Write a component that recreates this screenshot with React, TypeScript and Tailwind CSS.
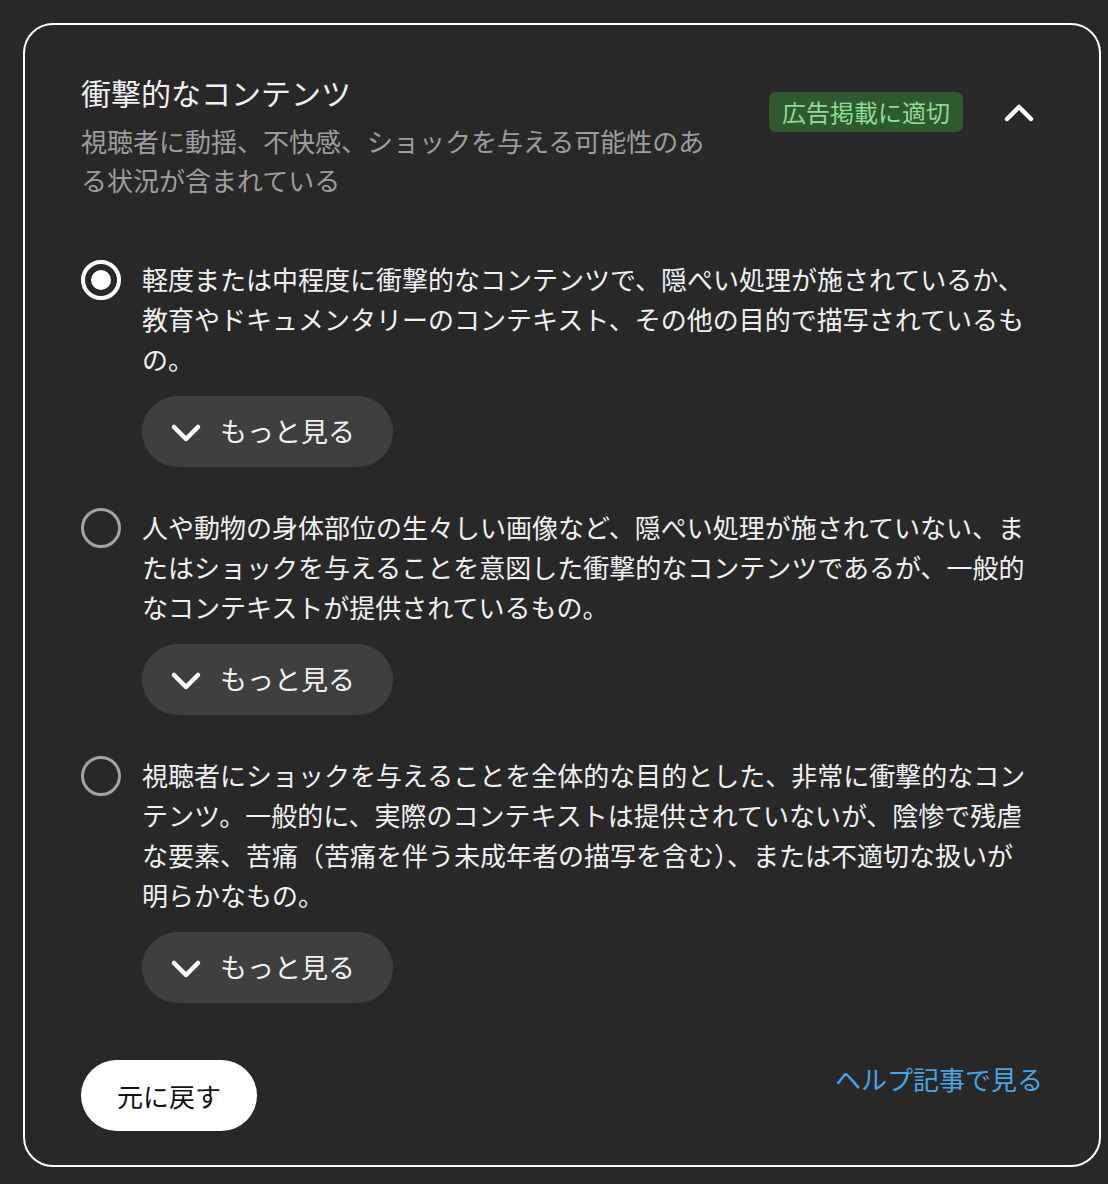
import React from "react";

const font = { fontFamily: '"Noto Sans CJK JP", "Noto Sans", sans-serif' };

function ChevronDown() {
  return (
    <svg width="32" height="32" viewBox="0 0 32 32" fill="none">
      <path d="M4 11 L16 23 L28 11" stroke="#ffffff" strokeWidth="4.5" strokeLinecap="round" strokeLinejoin="round" />
    </svg>
  );
}

function ChevronUp() {
  return (
    <svg width="32" height="32" viewBox="0 0 32 32" fill="none">
      <path d="M4 23 L16 11 L28 23" stroke="#ffffff" strokeWidth="4.5" strokeLinecap="round" strokeLinejoin="round" />
    </svg>
  );
}

function Radio({ checked }: { checked: boolean }) {
  return checked ? (
    <div className="w-[40px] h-[40px] rounded-full border-[4px] border-white flex items-center justify-center shrink-0">
      <div className="w-[20px] h-[20px] rounded-full bg-white" />
    </div>
  ) : (
    <div className="w-[40px] h-[40px] rounded-full border-[3.5px] border-[#a3a3a3] shrink-0" />
  );
}

function Option({ checked, text }: { checked: boolean; text: string }) {
  return (
    <div className="flex gap-[21px]">
      <div className="pt-[1px]">
        <Radio checked={checked} />
      </div>
      <div className="w-[886px]">
        <p className="text-[26px] leading-[40px] text-[#f1f1f1]">{text}</p>
        <button className="mt-[17px] h-[71px] w-[251px] rounded-full bg-[#3f3f3f] flex items-center pl-[28px] gap-[18px] text-[27px] text-[#f1f1f1]">
          <ChevronDown />
          <span>もっと見る</span>
        </button>
      </div>
    </div>
  );
}

export default function App() {
  return (
    <div className="min-h-[1184px] w-[1108px] bg-[#282828] pt-[23px] pl-[23px]" style={font}>
      <div className="w-[1078px] h-[1144px] rounded-[30px] border-2 border-white pt-[47px] pl-[56px] pr-[56px] pb-[32px] flex flex-col">
        <div className="flex justify-between">
          <div className="w-[640px]">
            <h2 className="text-[30px] leading-[40px] text-[#f1f1f1]">衝撃的なコンテンツ</h2>
            <p className="mt-[9px] text-[26px] leading-[39px] text-[#9d9d9d]">
              視聴者に動揺、不快感、ショックを与える可能性のある状況が含まれている
            </p>
          </div>
          <div className="flex items-center gap-[40px] mt-[20px] h-[40px] mr-[8px]">
            <span className="h-[40px] rounded-[7px] bg-[#2d5a2f] px-[13px] flex items-center text-[24px] text-[#93d894]">
              広告掲載に適切
            </span>
            <ChevronUp />
          </div>
        </div>

        <div className="mt-[60px] flex flex-col gap-[40px]">
          <Option
            checked={true}
            text="軽度または中程度に衝撃的なコンテンツで、隠ぺい処理が施されているか、教育やドキュメンタリーのコンテキスト、その他の目的で描写されているもの。"
          />
          <Option
            checked={false}
            text="人や動物の身体部位の生々しい画像など、隠ぺい処理が施されていない、またはショックを与えることを意図した衝撃的なコンテンツであるが、一般的なコンテキストが提供されているもの。"
          />
          <Option
            checked={false}
            text="視聴者にショックを与えることを全体的な目的とした、非常に衝撃的なコンテンツ。一般的に、実際のコンテキストは提供されていないが、陰惨で残虐な要素、苦痛（苦痛を伴う未成年者の描写を含む）、または不適切な扱いが明らかなもの。"
          />
        </div>

        <div className="mt-[57px] flex justify-between items-start">
          <button className="h-[71px] w-[176px] rounded-full bg-white text-[26px] text-[#111111] flex items-center justify-center">
            元に戻す
          </button>
          <a className="mt-[-1px] text-[26px] leading-[40px] text-[#4ba3e6]">ヘルプ記事で見る</a>
        </div>
      </div>
    </div>
  );
}
